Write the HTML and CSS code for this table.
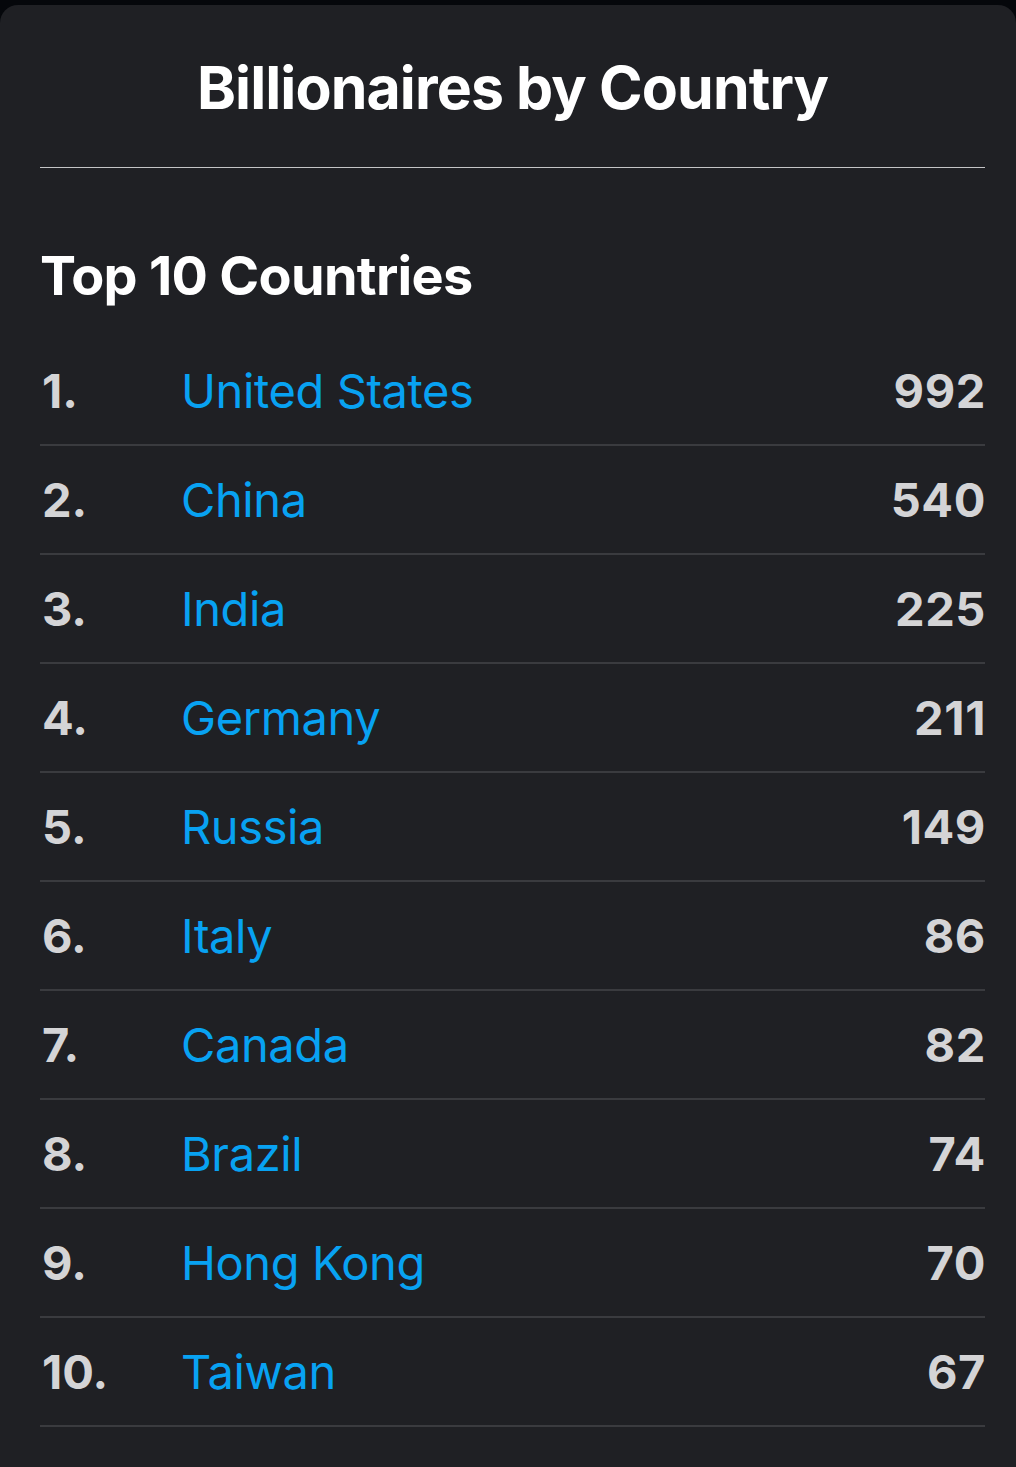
FILE: index.html
```html
<!DOCTYPE html>
<html lang="en">
<head>
<meta charset="utf-8">
<title>Billionaires by Country</title>
<link rel="stylesheet" href="styles.css">
</head>
<body>
<main class="card">
  <h1 class="title">Billionaires by Country</h1>
  <hr class="title-rule">
  <h2 class="section">Top 10 Countries</h2>
  <ol class="list">
    <li class="row"><span class="rank">1.</span><span class="name">United States</span><span class="count">992</span></li>
    <li class="row"><span class="rank">2.</span><span class="name">China</span><span class="count">540</span></li>
    <li class="row"><span class="rank">3.</span><span class="name">India</span><span class="count">225</span></li>
    <li class="row"><span class="rank">4.</span><span class="name">Germany</span><span class="count">211</span></li>
    <li class="row"><span class="rank">5.</span><span class="name">Russia</span><span class="count">149</span></li>
    <li class="row"><span class="rank">6.</span><span class="name">Italy</span><span class="count">86</span></li>
    <li class="row"><span class="rank">7.</span><span class="name">Canada</span><span class="count">82</span></li>
    <li class="row"><span class="rank">8.</span><span class="name">Brazil</span><span class="count">74</span></li>
    <li class="row"><span class="rank">9.</span><span class="name">Hong Kong</span><span class="count">70</span></li>
    <li class="row"><span class="rank">10.</span><span class="name">Taiwan</span><span class="count">67</span></li>
  </ol>
</main>
</body>
</html>
```

FILE: styles.css
```css
* { box-sizing: border-box; }
html, body {
  margin: 0;
  padding: 0;
  background: #05070b;
}
body {
  font-family: Inter, "Noto Sans", sans-serif;
  height: 1467px;
  overflow: hidden;
  padding-top: 5px;
}
.card {
  background: #1f2024;
  border-radius: 18px;
  height: 1480px;
  padding: 47px 31px 0 40px;
}
.title {
  margin: 0;
  font-size: 59px;
  line-height: 72px;
  font-weight: 700;
  color: #ffffff;
  text-align: center;
  letter-spacing: -0.9px;
}
.title-rule {
  margin: 43px 0 0;
  border: 0;
  height: 1px;
  background: #c4c4c6;
}
.section {
  margin: 75px 0 0;
  font-size: 54px;
  line-height: 66px;
  font-weight: 700;
  color: #ffffff;
  letter-spacing: -0.7px;
}
.list {
  list-style: none;
  margin: 28px 0 0;
  padding: 0;
}
.row {
  display: flex;
  align-items: center;
  height: 109px;
  border-bottom: 2px solid #3a3b3f;
  font-size: 47px;
}
.rank {
  width: 141px;
  font-weight: 700;
  color: #d4d4d6;
  padding-left: 2px;
}
.name {
  flex: 1;
  color: #08a2f2;
  font-weight: 400;
  letter-spacing: -0.4px;
}
.count {
  font-weight: 700;
  color: #d4d4d6;
  text-align: right;
  letter-spacing: 0.6px;
  margin-right: -1px;
}
```
